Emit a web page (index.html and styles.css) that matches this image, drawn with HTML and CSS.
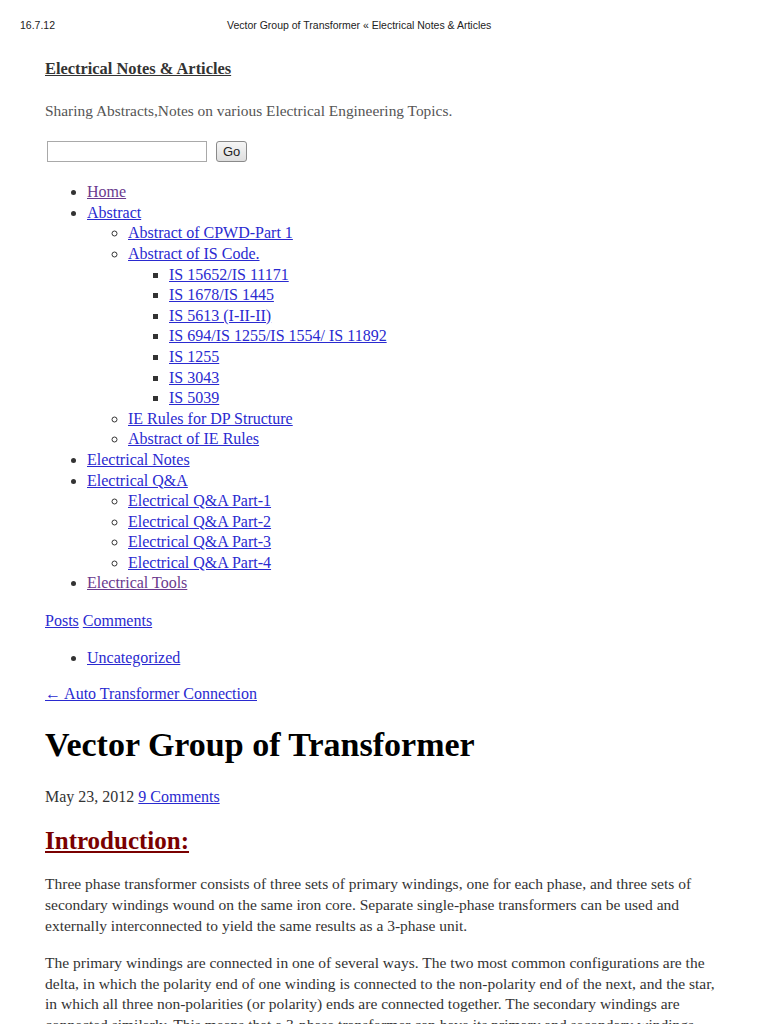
FILE: index.html
```html
<!DOCTYPE html>
<html>
<head>
<meta charset="utf-8">
<title>Vector Group of Transformer « Electrical Notes &amp; Articles</title>
<link rel="stylesheet" href="styles.css">
</head>
<body>
<div class="printbar">
  <span class="date">16.7.12</span>
  <span class="ptitle">Vector Group of Transformer « Electrical Notes &amp; Articles</span>
</div>
<div class="page">
  <div class="site-title"><a href="#">Electrical Notes &amp; Articles</a></div>
  <p class="tagline">Sharing Abstracts,Notes on various Electrical Engineering Topics.</p>
  <form class="search">
    <input type="text" class="sbox">
    <button type="button" class="go">Go</button>
  </form>
  <ul class="menu">
    <li><a class="visited" href="#">Home</a></li>
    <li><a href="#">Abstract</a>
      <ul>
        <li><a href="#">Abstract of CPWD-Part 1</a></li>
        <li><a href="#">Abstract of IS Code.</a>
          <ul>
            <li><a href="#">IS 15652/IS 11171</a></li>
            <li><a href="#">IS 1678/IS 1445</a></li>
            <li><a href="#">IS 5613 (I-II-II)</a></li>
            <li><a href="#">IS 694/IS 1255/IS 1554/ IS 11892</a></li>
            <li><a href="#">IS 1255</a></li>
            <li><a href="#">IS 3043</a></li>
            <li><a href="#">IS 5039</a></li>
          </ul>
        </li>
        <li><a href="#">IE Rules for DP Structure</a></li>
        <li><a href="#">Abstract of IE Rules</a></li>
      </ul>
    </li>
    <li><a href="#">Electrical Notes</a></li>
    <li><a href="#">Electrical Q&amp;A</a>
      <ul>
        <li><a href="#">Electrical Q&amp;A Part-1</a></li>
        <li><a href="#">Electrical Q&amp;A Part-2</a></li>
        <li><a href="#">Electrical Q&amp;A Part-3</a></li>
        <li><a href="#">Electrical Q&amp;A Part-4</a></li>
      </ul>
    </li>
    <li><a class="visited" href="#">Electrical Tools</a></li>
  </ul>
  <p class="feeds"><a href="#">Posts</a> <a href="#">Comments</a></p>
  <ul class="cats">
    <li><a href="#">Uncategorized</a></li>
  </ul>
  <p class="prev"><a href="#">← Auto Transformer Connection</a></p>
  <h1 class="post-title">Vector Group of Transformer</h1>
  <p class="meta">May 23, 2012 <a href="#">9 Comments</a></p>
  <h2 class="intro"><a href="#">Introduction:</a></h2>
  <p class="body">Three phase transformer consists of three sets of primary windings, one for each phase, and three sets of<br>secondary windings wound on the same iron core. Separate single-phase transformers can be used and<br>externally interconnected to yield the same results as a 3-phase unit.</p>
  <p class="body">The primary windings are connected in one of several ways. The two most common configurations are the<br>delta, in which the polarity end of one winding is connected to the non-polarity end of the next, and the star,<br>in which all three non-polarities (or polarity) ends are connected together. The secondary windings are<br>connected similarly. This means that a 3-phase transformer can have its primary and secondary windings<br>connected the same way.</p>
</div>
</body>
</html>
```

FILE: styles.css
```css
html, body {
  margin: 0;
  padding: 0;
  background: #ffffff;
}
body {
  font-family: "Liberation Serif", "Times New Roman", serif;
  font-size: 16px;
  line-height: 20.6px;
  color: #333333;
  overflow: hidden;
  height: 1024px;
}
a {
  color: #2a2ad0;
  text-decoration: underline;
}
a.visited {
  color: #6a3a8e;
}
.printbar {
  position: relative;
  height: 36px;
  font-family: "Liberation Sans", Arial, sans-serif;
  font-size: 10.5px;
  color: #222;
}
.printbar .date {
  position: absolute;
  left: 20px;
  top: 19px;
  line-height: 13px;
}
.printbar .ptitle {
  position: absolute;
  left: 227px;
  top: 19px;
  line-height: 13px;
}
.page {
  padding: 0 45px;
}
.site-title {
  margin-top: 23px;
  font-weight: bold;
  font-size: 16.4px;
}
.site-title a {
  color: #333333;
}
.tagline {
  margin: 21px 0 0;
  color: #555555;
  font-size: 15.4px;
}
.search {
  margin-top: 20px;
  display: flex;
  align-items: center;
  gap: 9px;
  padding-left: 2px;
}
.sbox {
  width: 160px;
  height: 21px;
  box-sizing: border-box;
  border: 1px solid #a9a9a9;
  margin: 0;
  padding: 0;
}
.go {
  height: 21px;
  box-sizing: border-box;
  padding: 0 6px;
  font-family: "Liberation Sans", Arial, sans-serif;
  font-size: 13px;
  color: #222;
  background: linear-gradient(#f6f6f6, #dedede);
  border: 1px solid #8a8a8a;
  border-radius: 3px;
  margin: 0;
}
ul {
  margin: 0;
  padding-left: 42px;
}
.menu {
  margin-top: 20px;
  list-style: disc;
}
.menu ul {
  list-style: circle;
  padding-left: 41px;
}
.menu ul ul {
  list-style: square;
}
.feeds {
  margin: 17px 0 0;
}
.cats {
  margin-top: 16px;
  list-style: disc;
}
.prev {
  margin: 16px 0 0;
}
.post-title {
  margin: 20px 0 0;
  font-size: 34px;
  line-height: 40px;
  font-weight: bold;
  color: #000000;
}
.meta {
  margin: 22px 0 0;
}
.intro {
  margin: 19px 0 0;
  font-size: 25px;
  line-height: 30px;
  font-weight: bold;
}
.intro a {
  color: #7a0000;
}
.body {
  margin: 18px 0 0;
  width: 720px;
  font-size: 15.5px;
  line-height: 20.8px;
}
.body + .body {
  margin-top: 16px;
}
```
